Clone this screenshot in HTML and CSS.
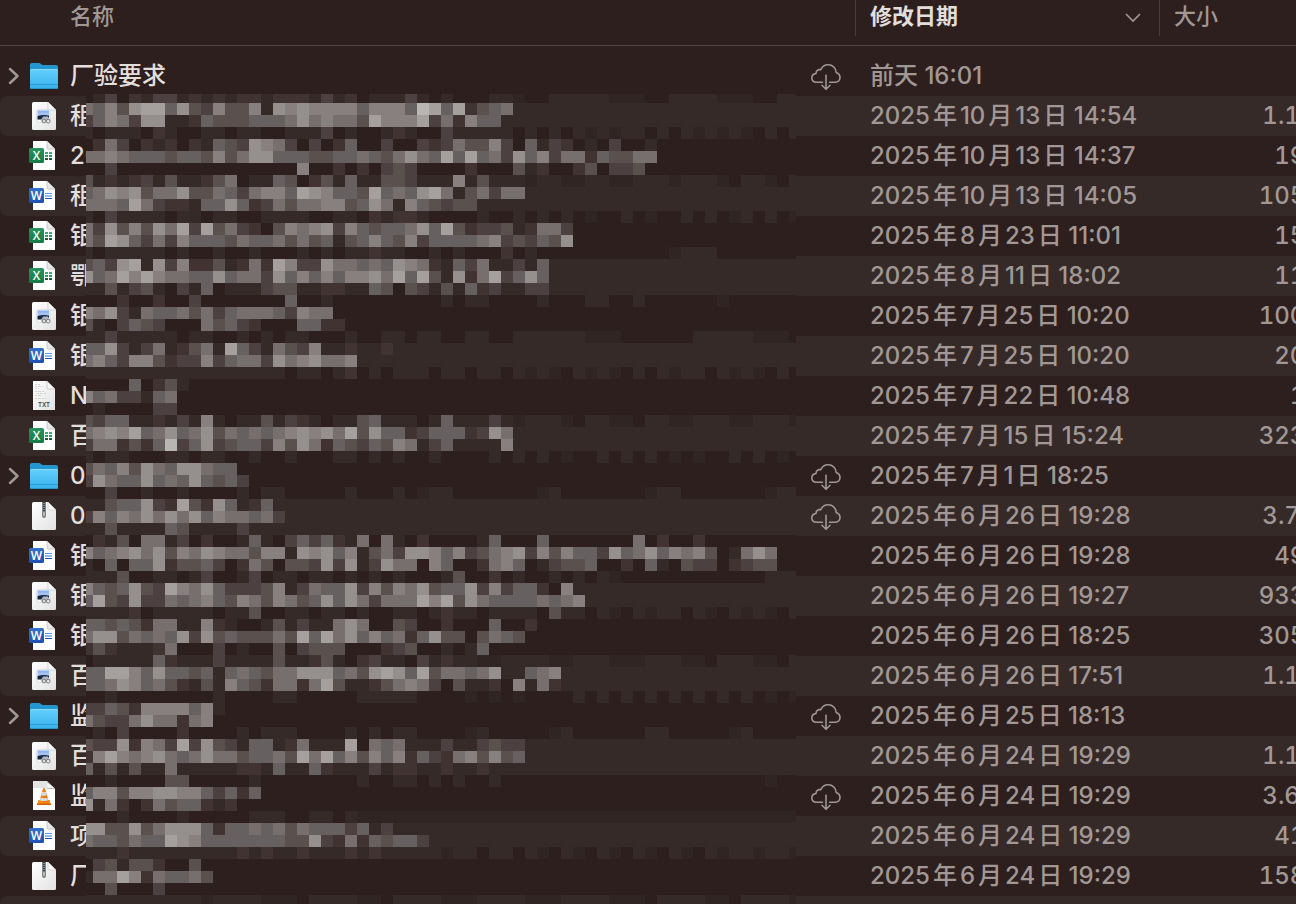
FILE: index.html
```html
<!DOCTYPE html>
<html lang="zh-CN">
<head>
<meta charset="utf-8">
<meta name="viewport" content="width=device-width, initial-scale=1">
<title>文件列表</title>
<link rel="stylesheet" href="styles.css">
</head>
<body>
<svg class="sprite" aria-hidden="true">
  <defs>
    <linearGradient id="g-folder" x1="0" y1="0" x2="0" y2="1"><stop offset="0" stop-color="#65d0fb"/><stop offset="1" stop-color="#35b0ec"/></linearGradient>
    <linearGradient id="g-paper" x1="0" y1="0" x2="1" y2="1"><stop offset="0" stop-color="#ffffff"/><stop offset="1" stop-color="#e2e2e2"/></linearGradient>
    <linearGradient id="g-excel" x1="0" y1="0" x2="0" y2="1"><stop offset="0" stop-color="#2a9560"/><stop offset="1" stop-color="#137a42"/></linearGradient>
    <linearGradient id="g-word" x1="0" y1="0" x2="0" y2="1"><stop offset="0" stop-color="#3372cf"/><stop offset="1" stop-color="#1f50b0"/></linearGradient>
    <linearGradient id="g-cone" x1="0" y1="0" x2="1" y2="0"><stop offset="0" stop-color="#f79a1c"/><stop offset="1" stop-color="#e0640a"/></linearGradient>
    <linearGradient id="g-sky" x1="0" y1="0" x2="0" y2="1"><stop offset="0" stop-color="#86b0ec"/><stop offset="1" stop-color="#b9d4f7"/></linearGradient>
  </defs>
  <symbol id="folder" viewBox="0 0 32 32">
    <path d="M2 4.500Q2 3 3.500 3H11q1 0 2 1l1.500 1H28q2 0 2 2v20q0 2-2 2H4q-2 0-2-2z" fill="#2496cd"/>
    <path d="M2 10q0-1 1-1h26q1 0 1 1v17q0 2-2 2H4q-2 0-2-2z" fill="url(#g-folder)"/>
    <path d="M3 9.500h26" stroke="#83dcff"/>
    <path d="M2 24.500h28M2 28.500h28" stroke="#2591c8" stroke-opacity=".8"/>
  </symbol>
  <symbol id="image" viewBox="0 0 32 32">
    <path d="M5.500 2H20l8 8v18.500q0 1.500-1.500 1.500h-21Q4 30 4 28.500v-25Q4 2 5.500 2z" fill="url(#g-paper)"/>
    <path d="M20 2v6.500q0 1.500 1.500 1.500H28z" fill="#fafafa" stroke="#c4c4c4" stroke-width=".7"/>
    <rect x="8.500" y="9.500" width="13.500" height="13" rx="2" fill="#f6f6f6" stroke="#d4d4d4" stroke-width=".6"/>
    <rect x="9.500" y="10.500" width="11.500" height="6" fill="url(#g-sky)"/>
    <path d="M9.500 16q5-1.500 11.500-.5v4H9.500z" fill="#18233c"/>
    <path d="M13 20l2-3.500h5l2 3.500v2h-8z" fill="#b5babf"/>
    <circle cx="16" cy="21" r="1.900" fill="#d9dcdf" stroke="#626970" stroke-width=".8"/>
    <circle cx="20.200" cy="21.200" r="1.900" fill="#e5e7e9" stroke="#626970" stroke-width=".8"/>
  </symbol>
  <symbol id="sheet" viewBox="0 0 32 32">
    <path d="M5 1h14l8 8v21H5z" fill="#fff"/>
    <path d="M19 1v6.500q0 1.500 1.500 1.500H27z" fill="#e8e8e8" stroke="#b7b7b7" stroke-width=".7"/>
  </symbol>
  <symbol id="excel" viewBox="0 0 32 32">
    <use href="#sheet"/>
    <path d="M17 13h3m1 0h3" stroke="#34b276" stroke-width="2"/>
    <path d="M17 16h3m1 0h3" stroke="#239d5e" stroke-width="2"/>
    <path d="M17 19h3m1 0h3" stroke="#185c37" stroke-width="2"/>
    <rect x="1" y="8" width="15" height="15" rx="1.500" fill="url(#g-excel)"/>
    <text x="8.500" y="19.500" class="badge">X</text>
  </symbol>
  <symbol id="word" viewBox="0 0 32 32">
    <use href="#sheet"/>
    <path d="M17 13.500h7" stroke="#43a5ee"/>
    <path d="M17 16h7" stroke="#2b7cd3"/>
    <path d="M17 18.500h7" stroke="#1f58b4"/>
    <rect x="1" y="8" width="15" height="15" rx="1.500" fill="url(#g-word)"/>
    <text x="8.500" y="19.500" class="badge">W</text>
  </symbol>
  <symbol id="txt" viewBox="0 0 32 32">
    <path d="M5 1h14l8 8v21H5z" fill="url(#g-paper)"/>
    <path d="M19 1v6.500q0 1.500 1.500 1.500H27z" fill="#fafafa" stroke="#b7b7b7" stroke-width=".7"/>
    <path d="M7 4.500h5M7 6.500h8M7 8.500h4M7 11.500h10M9 13.500h10M7 15.500h6M7 18.500h11" stroke="#d4d4d4" stroke-dasharray="2 1 3 1"/>
    <text x="16" y="27" class="ext">TXT</text>
  </symbol>
  <symbol id="zip" viewBox="0 0 32 32">
    <path d="M5.500 2H20l8 8v18.500q0 1.500-1.500 1.500h-21Q4 30 4 28.500v-25Q4 2 5.500 2z" fill="url(#g-paper)"/>
    <path d="M20 2v6.500q0 1.500 1.500 1.500H28z" fill="#fafafa" stroke="#c4c4c4" stroke-width=".7"/>
    <path d="M14 2h4v14q0 2-2 2t-2-2z" fill="#7d8585"/>
    <path d="M16 2v9" stroke="#3f4646" stroke-width="2" stroke-dasharray="1 1"/>
    <path d="M16 12v4" stroke="#c2c8c8" stroke-width="1.500"/>
  </symbol>
  <symbol id="video" viewBox="0 0 32 32">
    <path d="M5 1h14l8 8v21H5z" fill="#fbfbfb"/>
    <path d="M5 1h14l3 7H5z" fill="#e3e3e3"/>
    <path d="M19 1l8 8h-6.500q-1 0-1.500-1z" fill="#777"/>
    <path d="M19 2v5q0 1.500 1.500 1.500H27z" fill="#f5f5f5"/>
    <path d="M10.500 20h11l1.500 5H9z" fill="#f28a12"/>
    <path d="M9 23.500h14V25H9z" fill="#d65c00"/>
    <path d="M15 8.500q1-1 2 0L20.500 21q-4.500 2.500-9 0z" fill="url(#g-cone)"/>
    <path d="M14.200 12h3.600l.9 3.200q-2.700 1-5.400 0zM12.500 18h7l.7 2.200q-4.200 1.800-8.400 0z" fill="#d6dadc"/>
  </symbol>
  <symbol id="cloud" viewBox="0 0 32 28">
    <path d="M12.500 20.300H6.500C3.500 20.300 1.800 18.500 1.800 16c0-2.600 1.700-4.200 4.200-4.500-.2-2.800 2.200-4.300 4.700-3.700C12 4.600 14.700 2.700 18 2.700c4.800 0 8 3.400 8.200 7.800 2.200.8 3.800 2.600 3.800 4.900 0 2.900-2.300 4.900-5.200 4.900h-5.300"/>
    <path d="M16 13.300V27M12 23.300L16 27.200l4-3.900"/>
  </symbol>
  <symbol id="chevron" viewBox="0 0 16 20">
    <path d="M5 3L12.500 10L5 17"/>
  </symbol>
</svg>

<main class="browser">
<table class="files">
  <colgroup><col><col class="col-date"><col class="col-size"></colgroup>
  <thead>
    <tr>
      <th scope="col"><div class="head"><span class="label label-name">名称</span></div></th>
      <th scope="col" aria-sort="descending"><div class="head"><button class="label label-sort" type="button">修改日期<svg class="sort" viewBox="0 0 18 12" aria-hidden="true"><path d="M2 2l7 7 7-7"/></svg></button></div></th>
      <th scope="col"><div class="head"><span class="label label-size">大小</span></div></th>
    </tr>
  </thead>
  <tbody>
    <tr><td><div class="file"><button class="toggle" type="button" aria-label="展开"><svg><use href="#chevron"/></svg></button><svg class="icon"><use href="#folder"/></svg><span class="name">厂验要求</span><svg class="cloud"><use href="#cloud"/></svg></div></td><td class="date">前天 16:01</td><td class="size"></td></tr>
    <tr><td><div class="file"><svg class="icon"><use href="#image"/></svg><span class="name">租</span></div></td><td class="date">2025年10月13日 14:54</td><td class="size">1.1 MB</td></tr>
    <tr><td><div class="file"><svg class="icon"><use href="#excel"/></svg><span class="name">20</span></div></td><td class="date">2025年10月13日 14:37</td><td class="size">19 KB</td></tr>
    <tr><td><div class="file"><svg class="icon"><use href="#word"/></svg><span class="name">租</span></div></td><td class="date">2025年10月13日 14:05</td><td class="size">105 KB</td></tr>
    <tr><td><div class="file"><svg class="icon"><use href="#excel"/></svg><span class="name">银</span></div></td><td class="date">2025年8月23日 11:01</td><td class="size">15 KB</td></tr>
    <tr><td><div class="file"><svg class="icon"><use href="#excel"/></svg><span class="name">鄂</span></div></td><td class="date">2025年8月11日 18:02</td><td class="size">11 KB</td></tr>
    <tr><td><div class="file"><svg class="icon"><use href="#image"/></svg><span class="name">银</span></div></td><td class="date">2025年7月25日 10:20</td><td class="size">100 KB</td></tr>
    <tr><td><div class="file"><svg class="icon"><use href="#word"/></svg><span class="name">银</span></div></td><td class="date">2025年7月25日 10:20</td><td class="size">20 KB</td></tr>
    <tr><td><div class="file"><svg class="icon"><use href="#txt"/></svg><span class="name">N</span></div></td><td class="date">2025年7月22日 10:48</td><td class="size">1 KB</td></tr>
    <tr><td><div class="file"><svg class="icon"><use href="#excel"/></svg><span class="name">百</span></div></td><td class="date">2025年7月15日 15:24</td><td class="size">323 KB</td></tr>
    <tr><td><div class="file"><button class="toggle" type="button" aria-label="展开"><svg><use href="#chevron"/></svg></button><svg class="icon"><use href="#folder"/></svg><span class="name">0</span><svg class="cloud"><use href="#cloud"/></svg></div></td><td class="date">2025年7月1日 18:25</td><td class="size"></td></tr>
    <tr><td><div class="file"><svg class="icon"><use href="#zip"/></svg><span class="name">0</span><svg class="cloud"><use href="#cloud"/></svg></div></td><td class="date">2025年6月26日 19:28</td><td class="size">3.7 MB</td></tr>
    <tr><td><div class="file"><svg class="icon"><use href="#word"/></svg><span class="name">银</span></div></td><td class="date">2025年6月26日 19:28</td><td class="size">49 KB</td></tr>
    <tr><td><div class="file"><svg class="icon"><use href="#image"/></svg><span class="name">银</span></div></td><td class="date">2025年6月26日 19:27</td><td class="size">933 KB</td></tr>
    <tr><td><div class="file"><svg class="icon"><use href="#word"/></svg><span class="name">银</span></div></td><td class="date">2025年6月26日 18:25</td><td class="size">305 KB</td></tr>
    <tr><td><div class="file"><svg class="icon"><use href="#image"/></svg><span class="name">百</span></div></td><td class="date">2025年6月26日 17:51</td><td class="size">1.1 MB</td></tr>
    <tr><td><div class="file"><button class="toggle" type="button" aria-label="展开"><svg><use href="#chevron"/></svg></button><svg class="icon"><use href="#folder"/></svg><span class="name">监</span><svg class="cloud"><use href="#cloud"/></svg></div></td><td class="date">2025年6月25日 18:13</td><td class="size"></td></tr>
    <tr><td><div class="file"><svg class="icon"><use href="#image"/></svg><span class="name">百</span></div></td><td class="date">2025年6月24日 19:29</td><td class="size">1.1 MB</td></tr>
    <tr><td><div class="file"><svg class="icon"><use href="#video"/></svg><span class="name">监</span><svg class="cloud"><use href="#cloud"/></svg></div></td><td class="date">2025年6月24日 19:29</td><td class="size">3.6 MB</td></tr>
    <tr><td><div class="file"><svg class="icon"><use href="#word"/></svg><span class="name">项</span></div></td><td class="date">2025年6月24日 19:29</td><td class="size">41 KB</td></tr>
    <tr><td><div class="file"><svg class="icon"><use href="#zip"/></svg><span class="name">厂</span></div></td><td class="date">2025年6月24日 19:29</td><td class="size">158 KB</td></tr>
  </tbody>
</table>
<div class="rest"></div>
<canvas class="mosaic" width="710" height="810" aria-hidden="true"></canvas>
</main>
<script src="mosaic.js"></script>
</body>
</html>
```

FILE: styles.css
```css
* {
  box-sizing: border-box;
}

body {
  margin: 0;
  background: #2d1f1e;
  color: #a19896;
  font: 500 24px/40px Inter, "Noto Sans CJK SC", sans-serif;
}

.sprite {
  position: absolute;
  width: 0;
  height: 0;
}

.badge {
  font: 600 12px "Open Sans", sans-serif;
  fill: #fff;
  text-anchor: middle;
}

.ext {
  font: 600 6px Inter, sans-serif;
  fill: #444;
  text-anchor: middle;
}

.browser {
  position: relative;
  display: flex;
  flex-direction: column;
  min-height: 100vh;
  overflow: hidden;
}

/* The size column runs past the right edge of the window. */
.files {
  width: calc(100% + 48px);
  table-layout: fixed;
  border-spacing: 0;
}

.col-date {
  width: 304px;
}

.col-size {
  width: 185px;
}

th {
  padding: 0 0 10px;
  font-size: 22px;
  font-weight: 500;
  text-align: left;
}

.head {
  height: 46px;
  border-bottom: 1px solid #50433f;
}

.label {
  display: block;
  height: 36px;
  line-height: 32px;
  padding-left: 14px;
  border-left: 1px solid #483b39;
}

.label-name {
  padding-left: 70px;
  border-left: 0;
}

.label-sort {
  display: flex;
  align-items: flex-start;
  justify-content: space-between;
  width: 100%;
  padding: 0 17px 0 14px;
  border-width: 0 0 0 1px;
  background: none;
  color: #e2dedc;
  font: inherit;
  font-weight: 700;
  line-height: 32px;
}

.sort {
  width: 18px;
  height: 12px;
  margin-top: 12px;
  fill: none;
  stroke: #a19896;
  stroke-width: 1.6;
}

td {
  height: 40px;
  padding: 0;
  white-space: nowrap;
}

tbody tr:nth-child(even) td {
  background: #352a28;
}

tbody tr:nth-child(even) td:first-child {
  border-radius: 8px 0 0 8px;
}

.files .date {
  padding-left: 15px;
  text-autospace: normal;
}

.size {
  text-align: right;
  font-variant-numeric: tabular-nums;
}

.file {
  display: flex;
  align-items: center;
  height: 40px;
  padding: 0 13px 0 28px;
}

.toggle {
  width: 28px;
  height: 40px;
  margin-left: -28px;
  padding: 0 0 0 5px;
  border: 0;
  background: none;
  display: flex;
  align-items: center;
}

.toggle svg {
  width: 16px;
  height: 20px;
  fill: none;
  stroke: #a19896;
  stroke-width: 2.5;
  stroke-linecap: round;
  stroke-linejoin: round;
}

.icon {
  width: 32px;
  height: 32px;
  flex: none;
  margin-right: 10px;
}

.name {
  flex: 1;
  color: #e2dedc;
}

.cloud {
  width: 32px;
  height: 28px;
  flex: none;
  fill: none;
  stroke: #a19896;
  stroke-width: 1.6;
  stroke-linecap: round;
  stroke-linejoin: round;
}

.rest {
  flex: 1;
  min-height: 8px;
  background: #352a28;
  border-radius: 8px 0 0 0;
}

/* Pixelated cover that hides the private part of the file names. */
.mosaic {
  position: absolute;
  left: 86px;
  top: 94px;
}
```

FILE: mosaic.js
```js
// Brightness of every block, one string per line of blocks. Blocks after the
// end of a string take the colour of the table row behind them.
const lines = [
  "013021331212122122213120111310100011",
  "657489958437447187877775777" + "5a95924561",
  "35763881125444555686766497779362755",
  "101110210011011001113010012100311111010",
  "026302120215438763030250030032364473051320103001",
  "667655545547468855544556546865959563857366254466",
  "003000000000000000700202034300002000412002403340",
  "4121231411246011540241511443111714111",
  "5687846684465367759875549565896146366",
  "666596322155852364667745861754344",
  "103111101101100111100110212210000100101",
  "63847486939463204767837545568594233412663",
  "64985363755546556464514575473555567343548",
  "101111101001001000101011211001010002010",
  "453891837224126297338665658762153611315",
  "856979766558566385757577869594182693585",
  "114134103150111344112211540431415231133",
  "0002002003000000050010000000001011000010001100",
  "76831655646356665376600",
  "41035430006453200055220",
  "1131111101100101011000100110110011",
  "55831361246195316437112112111",
  "67537742337356638678667",
  "11111111111111111011012010111011011",
  "000050241000",
  "7563315600000",
  "010000330000",
  "435511213171011413210114511101511131",
  "6787956856846565678786948552355523861",
  "3662425a35834553748625435476135111171",
  "1011000110110010010001101010010000101",
  "465748658865500",
  "38655856585453000",
  "003001001000010110000010001",
  "114558329428512511111",
  "375768686857665631111",
  "1141111541111311111",
  "0214066130200151035352160610200001500050000000602002000",
  "7567868476876647718785714638875734678374755385685767401686",
  "1050558244530264044383813866075002675013445002051043302344",
  "11140011013001301101101010100014002010010101",
  "7545843976853334713655837476845583735520711",
  "594383365675476476458586366697948655556567",
  "11112011111011400110110100110121101111041",
  "5545426611721001413116860043002000500200",
  "6884656583845444649596857562584404654",
  "24211126000301004034440002340010150",
  "0111115211131111411241023110312",
  "5599758554515654668885648985946656811567",
  "5568756421417542662694112467630411207162",
  "0010000000010000110000011111000",
  "33542777757100",
  "6433686626700",
  "0103000020000101110000101011",
  "4338276393843155126111906561113113433",
  "2797678656866455649695747572532674745",
  "51414116111112215115211131221121121",
  "0010000440000010000000010011010",
  "5774778877535250",
  "81620264552120000",
  "00010000100000111001101",
  "884484688852556564655535131",
  "65546559875555555448326254553",
  "11121111111112121121112121111",
  "03414420040000",
  "166972655640000",
  "0040003000",
  "1111111111"
];

const shades = {
  0: "#2d1f1e", 1: "#352a28", 2: "#403332", 3: "#4c4140", 4: "#5a504e",
  5: "#676060", 6: "#766f6d", 7: "#87807e", 8: "#95908d", 9: "#a5a09d", a: "#b9b5b3"
};
const block = 12, firstWidth = 7, firstHeight = 9;
const canvas = document.querySelector(".mosaic");
const ctx = canvas.getContext("2d");

// Share of a line of blocks that lies on a striped table row.
function stripeShare(y, h) {
  let n = 0;
  for (let i = 0; i < h; i++) {
    if (y + i >= 2 && Math.floor((y + i - 2) / 40) % 2 === 0) n++;
  }
  return n / h;
}

lines.forEach((line, r) => {
  const y = r ? firstHeight + (r - 1) * block : 0;
  const h = r ? block : firstHeight;
  const share = stripeShare(y, h);
  for (let c = 0; c < 60; c++) {
    const x = c ? firstWidth + (c - 1) * block : 0;
    const w = c ? block : firstWidth;
    if (c < line.length) {
      ctx.fillStyle = shades[line[c]];
    } else if (share === 0 || share === 1) {
      ctx.fillStyle = shades[share];
    } else {
      const n = ((r * 37 + c * 61 + r * c * 13) % 29) / 29;
      ctx.fillStyle = n < share * 0.6 ? shades[1] : n < share ? "#312523" : shades[0];
    }
    ctx.fillRect(x, y, w, h);
  }
});
```
